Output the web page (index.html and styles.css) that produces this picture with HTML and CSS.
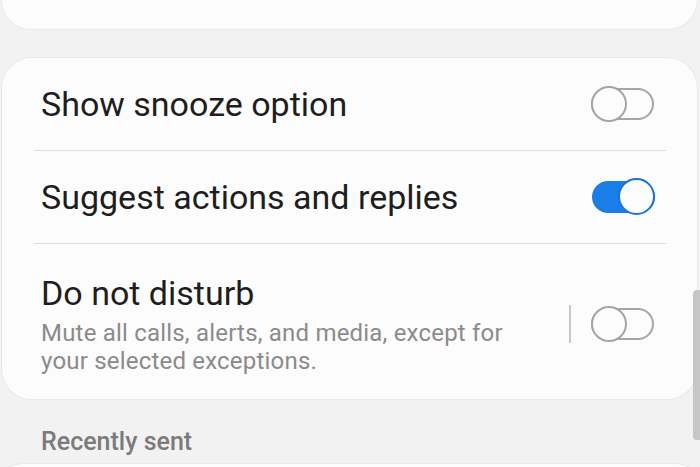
FILE: index.html
```html
<!DOCTYPE html>
<html lang="en">
<head>
  <meta charset="UTF-8" />
  <meta name="viewport" content="width=device-width, initial-scale=1.0"/>
  <title>Notification settings</title>
  <link rel="stylesheet" href="styles.css">
</head>
<body>
  <div class="card card-top"></div>

  <div class="card">
    <div class="row">
      <div class="row-text">
        <div class="title">Show snooze option</div>
      </div>
      <div class="switch"><span class="track"></span><span class="thumb"></span></div>
    </div>

    <div class="row">
      <div class="row-text">
        <div class="title">Suggest actions and replies</div>
      </div>
      <div class="switch on"><span class="track"></span><span class="thumb"></span></div>
    </div>

    <div class="row row-tall">
      <div class="row-text">
        <div class="title">Do not disturb</div>
        <div class="summary">Mute all calls, alerts, and media, except for your selected exceptions.</div>
      </div>
      <div class="split"></div>
      <div class="switch"><span class="track"></span><span class="thumb"></span></div>
    </div>
  </div>

  <div class="section-label">Recently sent</div>

  <div class="card card-bottom"></div>

  <div class="scrollbar"></div>
</body>
</html>
```

FILE: styles.css
```css
html {
  overflow: hidden;
}

body {
  margin: 0;
  background-color: #f2f2f2;
  font-family: Roboto, 'Noto Sans', sans-serif;
  height: 467px;
  overflow: hidden;
}

.card {
  margin: 0 3px 0 2px;
  background-color: #fcfcfc;
  border-radius: 30px;
  box-shadow: 0 0 0 1px #e9e9e9;
}

.card-top {
  height: 29px;
  margin-bottom: 29px;
  border-radius: 0 0 30px 30px;
}

.row {
  display: flex;
  align-items: center;
  box-sizing: border-box;
  margin: 0 31px 0 32px;
  height: 93px;
  border-bottom: 1px solid #dcdcdc;
}

.row-tall {
  height: auto;
  padding: 29px 0 24px;
  border-bottom: none;
}

.row-text {
  flex: 1;
  padding-left: 7px;
}

.title {
  font-size: 34px;
  line-height: 40px;
  color: #1e1e1e;
}

.summary {
  margin-top: 6px;
  width: 480px;
  font-size: 24px;
  line-height: 28px;
  letter-spacing: 0.2px;
  color: #8b8b8b;
}

.split {
  width: 2px;
  height: 38px;
  margin-right: 20px;
  background-color: #c9c9c9;
}

.switch {
  position: relative;
  width: 64px;
  height: 38px;
  margin-right: 11px;
}

.switch .track {
  position: absolute;
  left: 0;
  right: 1px;
  top: 3px;
  height: 32px;
  box-sizing: border-box;
  border: 2px solid #a5a5a5;
  border-radius: 16px;
}

.switch .thumb {
  position: absolute;
  left: 0;
  top: 1px;
  width: 36px;
  height: 36px;
  box-sizing: border-box;
  border: 2px solid #a5a5a5;
  border-radius: 50%;
  background-color: #fcfcfc;
}

.switch.on .track {
  left: 1px;
  right: 0;
  background-color: #1a7ee9;
  border-color: #1a7ee9;
}

.switch.on .thumb {
  left: auto;
  right: 0;
  width: 37px;
  height: 37px;
  top: 0;
  border-color: #1a74d6;
}

.section-label {
  box-sizing: border-box;
  padding: 28px 0 0 41px;
  height: 65px;
  font-size: 25px;
  font-weight: 500;
  color: #7b7b7b;
}

.card-bottom {
  height: 40px;
}

.scrollbar {
  position: absolute;
  right: 0;
  top: 290px;
  width: 7px;
  height: 150px;
  border-radius: 4px 0 0 4px;
  background-color: #c6c6c6;
}
```
